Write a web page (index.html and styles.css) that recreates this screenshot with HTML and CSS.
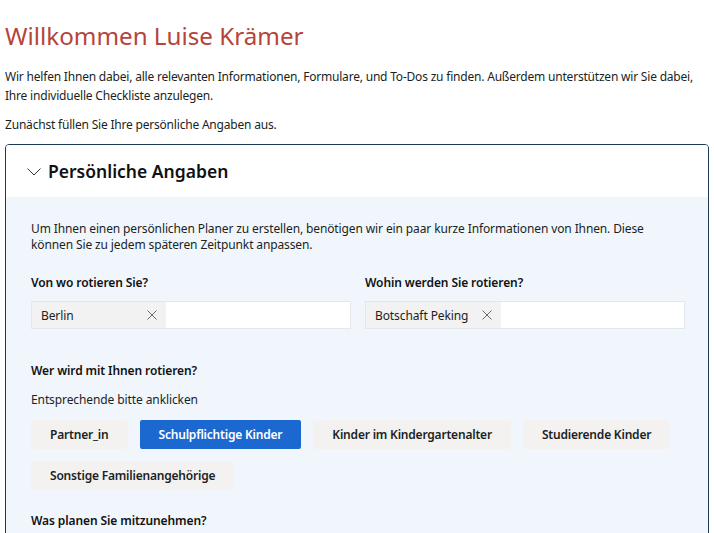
FILE: index.html
```html
<!DOCTYPE html>
<html lang="de">
<head>
<meta charset="utf-8">
<title>Willkommen</title>
<link rel="stylesheet" href="styles.css">
</head>
<body>
<h1 class="title">Willkommen Luise Krämer</h1>
<p class="intro">Wir helfen Ihnen dabei, alle relevanten Informationen, Formulare, und To-Dos zu finden. Außerdem unterstützen wir Sie dabei, Ihre individuelle Checkliste anzulegen.</p>
<p class="intro">Zunächst füllen Sie Ihre persönliche Angaben aus.</p>
<section class="card">
  <div class="card-head">
    <svg class="chev" width="14" height="8" viewBox="0 0 14 8"><path d="M0.5 0.5 L7 7 L13.5 0.5" fill="none" stroke="#333" stroke-width="1"/></svg>
    <h2 class="card-title">Persönliche Angaben</h2>
  </div>
  <div class="card-body">
    <p class="desc">Um Ihnen einen persönlichen Planer zu erstellen, benötigen wir ein paar kurze Informationen von Ihnen. Diese können Sie zu jedem späteren Zeitpunkt anpassen.</p>
    <div class="cols">
      <div class="field">
        <label class="label">Von wo rotieren Sie?</label>
        <div class="picker">
          <span class="chip chip-fixed">Berlin<svg class="x" width="10" height="10" viewBox="0 0 10 10"><path d="M0.5 0.5 L9.5 9.5 M9.5 0.5 L0.5 9.5" stroke="#6b6b6b" stroke-width="1" fill="none"/></svg></span>
        </div>
      </div>
      <div class="field">
        <label class="label">Wohin werden Sie rotieren?</label>
        <div class="picker">
          <span class="chip">Botschaft Peking<svg class="x" width="10" height="10" viewBox="0 0 10 10"><path d="M0.5 0.5 L9.5 9.5 M9.5 0.5 L0.5 9.5" stroke="#6b6b6b" stroke-width="1" fill="none"/></svg></span>
        </div>
      </div>
    </div>
    <h3 class="label q">Wer wird mit Ihnen rotieren?</h3>
    <p class="hint">Entsprechende bitte anklicken</p>
    <div class="btns">
      <button class="btn">Partner_in</button>
      <button class="btn active">Schulpflichtige Kinder</button>
      <button class="btn">Kinder im Kindergartenalter</button>
      <button class="btn">Studierende Kinder</button>
      <button class="btn">Sonstige Familienangehörige</button>
    </div>
    <h3 class="label q2">Was planen Sie mitzunehmen?</h3>
  </div>
</section>
</body>
</html>
```
FILE: styles.css
```css
html, body {
  background: #ffffff;
}
body {
  margin: 0 5px;
  font-family: "Noto Sans", "Open Sans", sans-serif;
  color: #201f1e;
  overflow: hidden;
  height: 533px;
}
.title {
  margin: 18px 0 0;
  font-size: 24.2px;
  font-weight: 400;
  line-height: 36px;
  color: #b5443a;
}
.intro {
  margin: 13px 0 0;
  font-size: 12px;
  letter-spacing: -0.2px;
  line-height: 19px;
}
.intro + .intro {
  margin-top: 10px;
}
.card {
  margin-top: 10px;
  border: 1px solid #1c3a58;
  border-radius: 4px;
  overflow: hidden;
}
.card-head {
  display: flex;
  align-items: center;
  gap: 7px;
  height: 52px;
  padding-left: 21px;
  background: #fff;
}
.chev {
  margin-top: 2px;
}
.card-title {
  margin: 0;
  font-size: 17.5px;
  font-weight: 600;
  color: #111;
}
.card-body {
  background: #f1f6fc;
  padding: 24px 25px 20px;
}
.desc {
  margin: 0;
  font-size: 12px;
  letter-spacing: -0.12px;
  line-height: 16px;
  max-width: 630px;
}
.cols {
  display: grid;
  grid-template-columns: 320px 320px;
  column-gap: 14px;
  margin-top: 21px;
}
.label {
  display: block;
  margin: 0;
  font-size: 12px;
  font-weight: 600;
  letter-spacing: -0.1px;
  line-height: 18px;
  color: #111;
}
.picker {
  margin-top: 9px;
  height: 26px;
  border: 1px solid #e3e7ec;
  background: #fff;
  display: flex;
}
.chip {
  display: flex;
  align-items: center;
  background: #f2f2f2;
  font-size: 12px;
  letter-spacing: -0.1px;
  padding-left: 9px;
  color: #201f1e;
}
.chip .x {
  margin-left: 14px;
  margin-right: 9px;
}
.chip-fixed {
  width: 125px;
}
.chip-fixed .x {
  margin-left: auto;
}
.q {
  margin-top: 33px;
}
.hint {
  margin: 11px 0 0;
  font-size: 12px;
  letter-spacing: -0.1px;
  line-height: 18px;
}
.btns {
  display: flex;
  flex-wrap: wrap;
  gap: 12px 12px;
  margin-top: 11px;
  max-width: 660px;
}
.btn {
  font-family: inherit;
  font-size: 12px;
  letter-spacing: -0.2px;
  font-weight: 600;
  color: #201f1e;
  background: #f3f2f1;
  border: none;
  border-radius: 2px;
  height: 29px;
  padding: 0 19px;
}
.btn.active {
  background: #1b69d0;
  color: #fff;
}
.q2 {
  margin-top: 22px;
}
```
